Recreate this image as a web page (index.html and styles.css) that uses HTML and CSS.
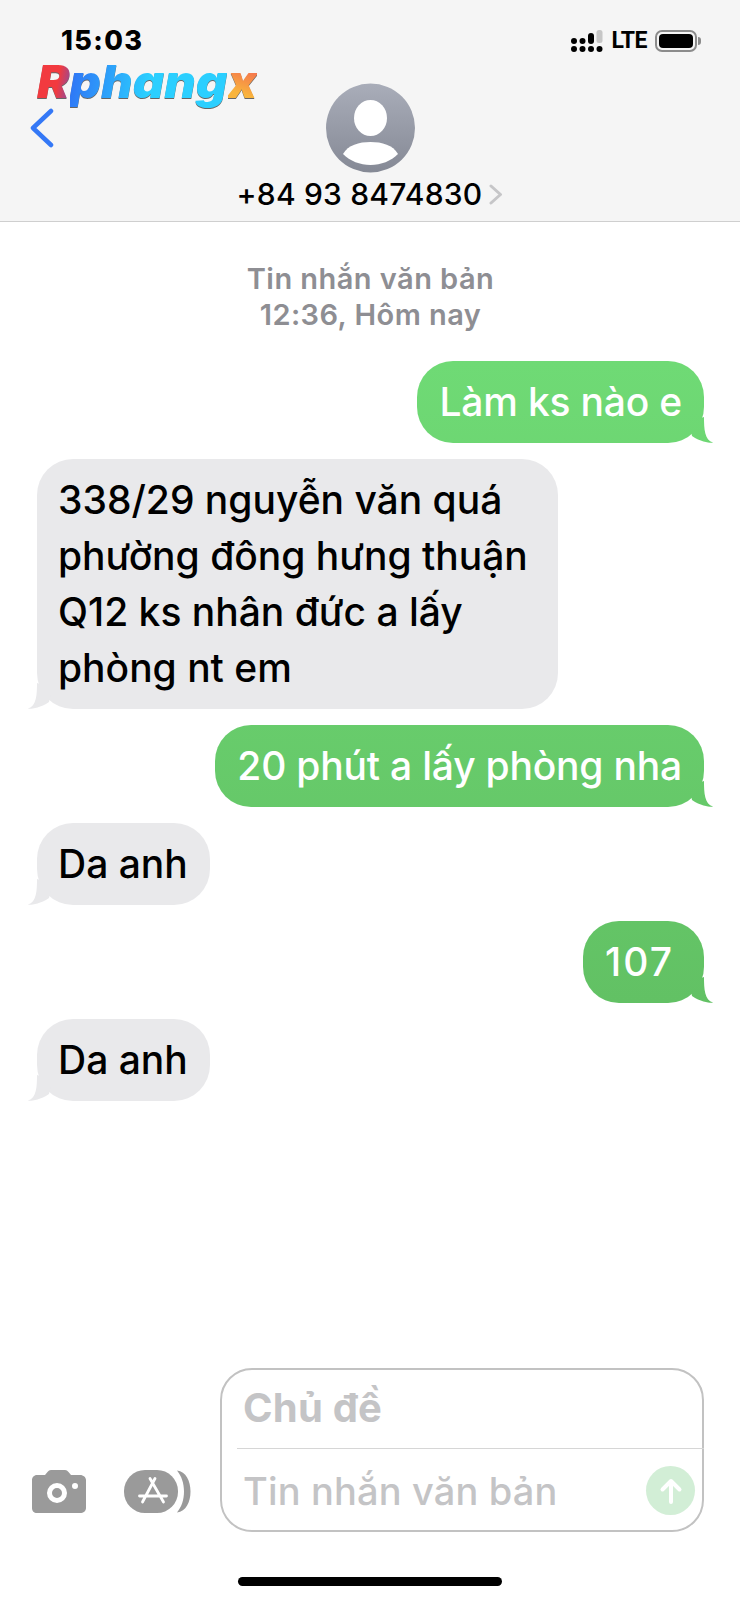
FILE: index.html
```html
<!DOCTYPE html>
<html lang="vi">

<head>
    <meta charset="UTF-8">
    <meta name="viewport" content="width=device-width, initial-scale=1.0">
    <title>Tin nhắn</title>
    <link rel="stylesheet" href="styles.css">
</head>

<body>
    <div class="phone">
        <header class="top">
            <div class="status">
                <span class="time">15:03</span>
                <div class="status-right">
                    <svg class="signal" width="32" height="22" viewBox="0 0 32 22">
                        <circle cx="3" cy="11" r="3" />
                        <circle cx="3" cy="19" r="3" />
                        <circle cx="11.5" cy="11" r="3" />
                        <circle cx="11.5" cy="19" r="3" />
                        <rect x="17" y="3" width="6" height="11" rx="3" />
                        <circle cx="20" cy="19" r="3" />
                        <rect x="25.500" y="0" width="6" height="13" rx="2.500" fill="#c6c6c6" />
                        <circle cx="28.500" cy="19" r="3" />
                    </svg>
                    <span class="lte">LTE</span>
                    <div class="battery"><div class="battery-fill"></div></div>
                </div>
            </div>
            <div class="logo"><span class="logo-r">R</span><span class="logo-mid">phang</span><span class="logo-x">x</span></div>
            <div class="nav">
                <svg class="back" width="24" height="40" viewBox="0 0 24 40">
                    <path d="M21 3 L3 20 L21 37" fill="none" stroke="#3478f6" stroke-width="4.500" stroke-linecap="round" stroke-linejoin="round" />
                </svg>
                <div class="contact">
                    <svg class="avatar" width="89" height="90" viewBox="0 0 89 90">
                        <defs>
                            <linearGradient id="av" x1="0" y1="0" x2="0" y2="1">
                                <stop offset="0" stop-color="#a9adb9" />
                                <stop offset="1" stop-color="#858995" />
                            </linearGradient>
                        </defs>
                        <circle cx="44.500" cy="45" r="44.500" fill="url(#av)" />
                        <ellipse cx="44.500" cy="35" rx="16.500" ry="18" fill="#fff" />
                        <path d="M17 71 C22 62 33 59 44.500 59 C56 59 67 62 72 71 C65 78 55 82 44.500 82 C34 82 24 78 17 71 Z" fill="#fff" />
                    </svg>
                    <div class="name-row">
                        <span class="name">+84 93 8474830</span>
                        <svg width="14" height="21" viewBox="0 0 14 21">
                            <path d="M2 2 L11.500 10.500 L2 19" fill="none" stroke="#c6c6c8" stroke-width="3" stroke-linecap="round" stroke-linejoin="round" />
                        </svg>
                    </div>
                </div>
            </div>
        </header>

        <main class="thread">
            <div class="stamp">
                <div>Tin nhắn văn bản</div>
                <div>12:36, Hôm nay</div>
            </div>
            <div class="bubble out">Làm ks nào e</div>
            <div class="bubble in wide">338/29 nguyễn văn quá<br>phường đông hưng thuận<br>Q12 ks nhân đức a lấy<br>phòng nt em</div>
            <div class="bubble out">20 phút a lấy phòng nha</div>
            <div class="bubble in">Da anh</div>
            <div class="bubble out num">107</div>
            <div class="bubble in">Da anh</div>
        </main>

        <div class="composer">
            <svg class="camera" width="54" height="43" viewBox="0 0 54 43">
                <path fill="#9a9a9a" fill-rule="evenodd" d="M5 5 H13 L15.500 2 C16.500 .8 17.500 0 19 0 H33 C34.500 0 35.500 .8 36.500 2 L39 5 H48 C51.500 5 54 7.500 54 10 V38 C54 41 51.500 43 48 43 H5 C2 43 0 41 0 38 V10 C0 7.500 2 5 5 5 Z M25 13 A10 10 0 1 0 25 33 A10 10 0 1 0 25 13 Z M25 18 A5 5 0 1 1 25 28 A5 5 0 1 1 25 18 Z M43 13 A3 3 0 1 0 43 19 A3 3 0 1 0 43 13 Z" />
            </svg>
            <svg class="apps" width="67" height="43" viewBox="0 0 67 43">
                <rect x="0" y="0" width="54" height="43" rx="21" fill="#9a9a9a" />
                <path d="M26 8.500 L39.500 32 M31 8.500 L18.500 32 M15.500 26 H42.500" fill="none" stroke="#fff" stroke-width="2.800" stroke-linecap="round" />
                <path d="M53 .5 C62 1.500 66.500 11 66.500 21.500 C66.500 32 62 41.500 53 42.500 C57.500 37 60 30 60 21.500 C60 13 57.500 6 53 .5 Z" fill="#9a9a9a" />
            </svg>
            <div class="box">
                <div class="subject">Chủ đề</div>
                <div class="body-row">
                    <span class="placeholder">Tin nhắn văn bản</span>
                    <div class="send">
                        <svg width="24" height="28" viewBox="0 0 24 28">
                            <path d="M12 25 V4 M3.500 12.500 L12 4 L20.500 12.500" fill="none" stroke="#fff" stroke-width="4" stroke-linecap="round" stroke-linejoin="round" />
                        </svg>
                    </div>
                </div>
            </div>
        </div>
        <div class="home-wrap"><div class="home"></div></div>
    </div>
</body>

</html>
```

FILE: styles.css
```css
* {
    box-sizing: border-box;
}
body {
    margin: 0;
    background-color: #fff;
    font-family: Inter, "Noto Sans", sans-serif;
    color: #000;
}
.phone {
    width: 740px;
    height: 1600px;
    display: flex;
    flex-direction: column;
    overflow: hidden;
}

/* header */
.top {
    position: relative;
    height: 222px;
    flex: none;
    background-color: #f5f5f5;
    border-bottom: 1px solid #cfcfcf;
}
.status {
    display: flex;
    justify-content: space-between;
    align-items: center;
    height: 52px;
    padding: 29px 43px 0 61px;
}
.time {
    font-size: 27px;
    font-weight: 800;
    line-height: 22px;
    letter-spacing: 1.4px;
}
.status-right {
    display: flex;
    align-items: center;
    gap: 8px;
}
.lte {
    font-family: Roboto, sans-serif;
    font-size: 23px;
    font-weight: 700;
    line-height: 22px;
    letter-spacing: -0.5px;
}
.battery {
    position: relative;
    width: 42px;
    height: 22px;
    padding: 2px;
    border: 2px solid #8c8c8c;
    border-radius: 7px;
}
.battery::after {
    content: "";
    position: absolute;
    right: -6px;
    top: 5px;
    width: 3px;
    height: 8px;
    background-color: #8c8c8c;
    border-radius: 0 3px 3px 0;
}
.battery-fill {
    height: 100%;
    background-color: #000;
    border-radius: 4px;
}
.logo {
    position: absolute;
    left: 37px;
    top: 53px;
    font-size: 46px;
    font-weight: 900;
    font-style: italic;
    line-height: 56px;
    transform: scaleX(1.06);
    transform-origin: left center;
    filter: drop-shadow(0 1px 0 #666);
}
.logo span {
    -webkit-background-clip: text;
    background-clip: text;
    color: transparent;
}
.logo-r {
    background-image: linear-gradient(100deg, #f23a3f 60%, #7a4fb0);
}
.logo-mid {
    background-image: linear-gradient(100deg, #2f6ff5, #2bcfff 50%);
}
.logo-x {
    background-image: linear-gradient(20deg, #f9b43c 30%, #f0455c);
}
.nav {
    display: grid;
    grid-template-columns: 1fr auto 1fr;
    padding-top: 31px;
}
.back {
    margin: 25px 0 0 30px;
}
.contact {
    display: flex;
    flex-direction: column;
    align-items: center;
    gap: 8px;
}
.name-row {
    display: flex;
    align-items: center;
    gap: 7px;
}
.name {
    font-size: 30px;
    font-weight: 500;
    line-height: 26px;
    letter-spacing: 0.2px;
}

/* messages */
.thread {
    flex: 1;
    display: flex;
    flex-direction: column;
    gap: 16px;
    padding: 39px 36px 0 37px;
}
.stamp {
    margin-bottom: 12px;
    text-align: center;
    font-size: 29px;
    font-weight: 600;
    line-height: 36px;
    letter-spacing: 0.45px;
    color: #8e8e93;
}
.bubble {
    position: relative;
    padding: 13px 22px;
    border-radius: 36px;
    font-size: 39px;
    font-weight: 500;
    line-height: 56px;
    white-space: nowrap;
}
.bubble::before {
    content: "";
    position: absolute;
    bottom: 0;
    width: 24px;
    height: 26px;
}
.out {
    align-self: flex-end;
    color: #fff;
    letter-spacing: -0.2px;
    background: linear-gradient(#75e07b 0, #6fda75 361px, #62c164 1003px) fixed;
}
.out::before {
    right: -9px;
    background: inherit;
    clip-path: path("M15 0 C15 12 15.500 23 24 25.500 C24 26 14 26.500 3 19 L0 5 Z");
}
.num {
    padding-right: 30px;
    letter-spacing: 2px;
}
.in {
    align-self: flex-start;
    padding-left: 21px;
    background-color: #e9e9eb;
}
.in::before {
    left: -9px;
    background-color: #e9e9eb;
    clip-path: path("M9 0 C9 12 8.500 23 0 25.500 C0 26 10 26.500 21 19 L24 5 Z");
}
.wide {
    padding-right: 30px;
}

/* bottom */
.composer {
    flex: none;
    display: flex;
    align-items: flex-end;
    padding: 0 36px 0 32px;
}
.camera {
    flex: none;
    margin: 0 38px 19px 0;
}
.apps {
    flex: none;
    margin: 0 29px 19px 0;
}
.box {
    flex: 1;
    height: 164px;
    display: flex;
    flex-direction: column;
    padding-left: 15px;
    border: 2px solid #c2c2c2;
    border-radius: 32px;
}
.subject {
    height: 79px;
    padding: 16px 0 0 6px;
    border-bottom: 1px solid #d6d6d6;
    margin-right: -2px;
    font-size: 40px;
    font-weight: 700;
    line-height: 44px;
    letter-spacing: 0.2px;
    color: #c4c4c6;
}
.body-row {
    flex: 1;
    display: flex;
    justify-content: space-between;
    align-items: center;
    padding: 2px 7px 0 6px;
}
.placeholder {
    font-size: 38px;
    font-weight: 500;
    line-height: 44px;
    letter-spacing: 0.15px;
    color: #c4c4c6;
}
.send {
    display: flex;
    align-items: center;
    justify-content: center;
    width: 49px;
    height: 49px;
    border-radius: 50%;
    background-color: #d2eed6;
}
.home-wrap {
    flex: none;
    padding: 45px 0 14px;
    display: flex;
    justify-content: center;
}
.home {
    width: 264px;
    height: 9px;
    border-radius: 5px;
    background-color: #000;
}
```
